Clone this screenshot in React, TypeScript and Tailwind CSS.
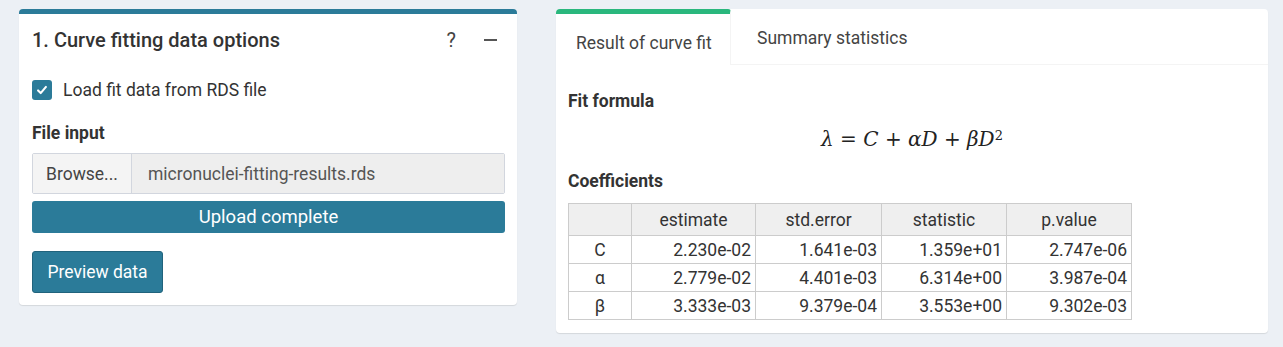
import React from "react";

const rows = [
  { name: "C", values: ["2.230e-02", "1.641e-03", "1.359e+01", "2.747e-06"] },
  { name: "α", values: ["2.779e-02", "4.401e-03", "6.314e+00", "3.987e-04"] },
  { name: "β", values: ["3.333e-03", "9.379e-04", "3.553e+00", "9.302e-03"] },
];

const cols = ["estimate", "std.error", "statistic", "p.value"];
const widths = ["w-[124px]", "w-[126px]", "w-[125px]", "w-[125px]"];

const App = () => {
  return (
    <div
      className="min-h-[347px] w-full bg-[#ecf0f5] text-[#333] flex items-start gap-[39px] pl-[19px] pt-[9px]"
      style={{ fontFamily: "Roboto, 'Noto Sans', sans-serif" }}
    >
      {/* Left box */}
      <div className="w-[498px] h-[296px] bg-white rounded-[4px] border-t-[5px] border-[#2b7b99] shadow-[0_1px_1px_rgba(0,0,0,0.1)]">
        <div className="flex h-[52px] items-center px-[13px]">
          <h3 className="text-[20px] font-medium text-[#333] flex-1">1. Curve fitting data options</h3>
          <span className="text-[20px] text-[#444] mr-[28px]">?</span>
          <span className="block w-[13px] h-[2px] bg-[#555] mr-[7px]" />
        </div>
        <div className="pl-[13px] pr-[12px] text-[17.5px] leading-[20px]">
          <label className="flex h-[20px] items-center gap-[11px] mt-[14px]">
            <span className="flex h-[20px] w-[20px] items-center justify-center rounded-[3px] bg-[#2b7b99]">
              <svg viewBox="0 0 16 16" className="h-[14px] w-[14px]" fill="none" stroke="white" strokeWidth={2.4} strokeLinecap="round" strokeLinejoin="round">
                <path d="M3.5 8.5l3 3 6-7" />
              </svg>
            </span>
            <span>Load fit data from RDS file</span>
          </label>
          <div className="mt-[23px] font-bold">File input</div>
          <div className="mt-[10px] flex h-[41px] border border-[#d2d6de] rounded-[2px] overflow-hidden">
            <div className="w-[99px] flex items-center justify-center bg-[#f4f4f4] border-r border-[#d2d6de] text-[#444]">Browse...</div>
            <div className="flex-1 flex items-center pl-[16px] bg-[#eeeeee] text-[#555]">micronuclei-fitting-results.rds</div>
          </div>
          <div className="mt-[7px] h-[32px] rounded-[3px] bg-[#2b7b99] flex items-center justify-center text-white text-[18.5px]">
            Upload complete
          </div>
          <button className="mt-[18px] h-[42px] w-[131px] rounded-[3px] bg-[#2b7b99] border border-[#21637c] text-white">
            Preview data
          </button>
        </div>
      </div>

      {/* Right box */}
      <div className="w-[712px] h-[324px] bg-white rounded-[4px] shadow-[0_1px_1px_rgba(0,0,0,0.1)] text-[17.5px] leading-[20px]">
        <div className="flex border-b border-[#f4f4f4] h-[56px]">
          <div className="w-[175px] border-t-[5px] border-[#2ab77d] border-r border-r-[#f4f4f4] rounded-tl-[4px] rounded-tr-[3px] flex items-center pl-[20px] pt-[6px] -mb-px bg-white text-[#444]">
            Result of curve fit
          </div>
          <div className="pl-[26px] pt-[19px] text-[#444]">Summary statistics</div>
        </div>
        <div className="px-[12px]">
          <div className="mt-[26px] font-bold">Fit formula</div>
          <div
            className="mt-[14px] h-[28px] leading-[28px] text-center text-[20px] text-[#222]"
            style={{ fontFamily: "'DejaVu Serif', 'Liberation Serif', serif" }}
          >
            <i>λ</i> = <i>C</i> + <i>αD</i> + <i>βD</i><sup className="text-[13px] not-italic">2</sup>
          </div>
          <div className="mt-[18px] font-bold">Coefficients</div>
          <table className="mt-[12px] border-collapse text-[#333]">
            <thead>
              <tr className="bg-[#efefef]">
                <th className="w-[63px] h-[32px] border border-[#cccccc]" />
                {cols.map((c, i) => (
                  <th key={c} className={`${widths[i]} h-[32px] border border-[#cccccc] font-normal text-center`}>{c}</th>
                ))}
              </tr>
            </thead>
            <tbody>
              {rows.map((r) => (
                <tr key={r.name}>
                  <td className="h-[28px] p-0 border border-[#cccccc] text-center">{r.name}</td>
                  {r.values.map((v, i) => (
                    <td key={i} className="h-[28px] p-0 border border-[#cccccc] text-right pr-[4px]">{v}</td>
                  ))}
                </tr>
              ))}
            </tbody>
          </table>
        </div>
      </div>
    </div>
  );
};

export default App;
